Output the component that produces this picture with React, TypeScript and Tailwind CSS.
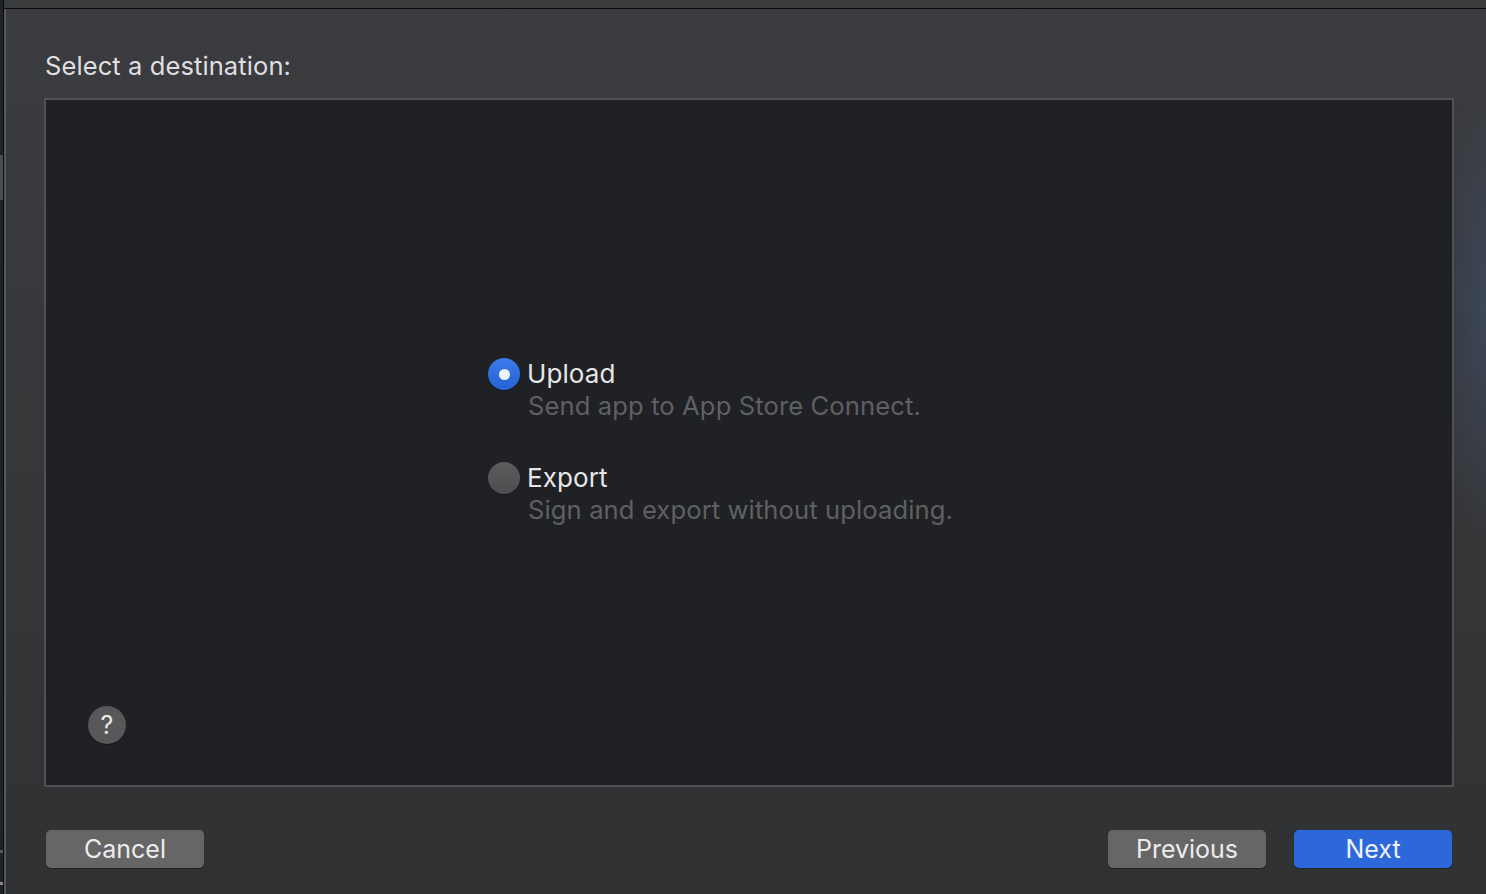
import React from "react";

const font = { fontFamily: "Inter, 'Noto Sans', 'Liberation Sans', sans-serif" };

function Radio({ checked }: { checked: boolean }) {
  return checked ? (
    <div className="w-[32px] h-[32px] rounded-full bg-[linear-gradient(180deg,#3a7bea_0%,#2762d2_100%)] flex items-center justify-center shrink-0 shadow-[0_1px_1px_rgba(0,0,0,0.4)]">
      <div className="w-[11px] h-[11px] rounded-full bg-[#eef2fb]" />
    </div>
  ) : (
    <div className="w-[32px] h-[32px] rounded-full bg-[linear-gradient(180deg,#5c5c5e_0%,#4d4d4f_100%)] shrink-0 shadow-[0_1px_1px_rgba(0,0,0,0.4)]" />
  );
}

function Option({ checked, title, sub }: { checked: boolean; title: string; sub: string }) {
  return (
    <div className="flex flex-col">
      <div className="flex items-center gap-[7px] h-[32px]">
        <Radio checked={checked} />
        <span className="text-[26px] leading-[32px] text-[#e6e6e7] tracking-[0.1px]">{title}</span>
      </div>
      <div className="pl-[40px] text-[25.6px] leading-[32px] text-[#5f6063] tracking-[0.1px]">{sub}</div>
    </div>
  );
}

function Btn({ label, primary }: { label: string; primary?: boolean }) {
  return (
    <button
      className={
        "w-[158px] h-[38px] rounded-[5px] text-[25px] leading-[38px] text-center text-[#ececec] shadow-[0_1px_1px_rgba(0,0,0,0.35)] " +
        (primary ? "bg-[#2c68da] text-[#eef2fb]" : "bg-[#666667]")
      }
    >
      {label}
    </button>
  );
}

export default function App() {
  return (
    <div className="w-[1486px] h-[894px] flex overflow-hidden bg-[#1d2024]" style={font}>
      {/* left edge */}
      <div className="w-[3px] flex flex-col bg-[#1f2226]">
        <div className="h-[155px]" />
        <div className="h-[45px] bg-[#4a4d52]" />
        <div className="flex-1" />
        <div className="h-[3px] bg-[#55585c]" />
        <div className="h-[29px]" />
        <div className="h-[3px] bg-[#8a8a8a]" />
        <div className="h-[9px]" />
      </div>
      <div className="w-px bg-[#0b0b0c]" />
      <div className="flex-1 flex flex-col">
        <div className="h-[8px] bg-[#3a3b3d]" />
        <div className="h-px bg-[#0c0c0d]" />
        <div className="flex-1 flex">
          <div className="w-[2px] bg-[#55575a]" />
          <div className="flex-1 flex flex-col pl-[38px] pr-[32px] pt-[42px] bg-[radial-gradient(ellipse_50px_230px_at_100%_34%,rgba(70,95,140,0.38)_0%,rgba(70,95,140,0)_100%),linear-gradient(180deg,#3b3c3f_0%,#363739_50%,#303133_100%)]">
            <div className="h-[30px] leading-[30px] text-[25.5px] text-[#dfdfe0] pl-[1px] tracking-[0.1px]">
              Select a destination:
            </div>
            <div className="mt-[17px] h-[689px] border-2 border-[#505153] bg-[#202124] flex flex-col">
              <div className="flex-1 flex items-center pt-[78px] pl-[442px]">
                <div className="flex flex-col gap-[40px]">
                  <Option checked title="Upload" sub="Send app to App Store Connect." />
                  <Option checked={false} title="Export" sub="Sign and export without uploading." />
                </div>
              </div>
              <div className="h-[79px] pl-[42px]">
                <div className="w-[38px] h-[38px] rounded-full bg-[#58585a] flex items-center justify-center text-[25px] text-[#e8e8e8] leading-none shadow-[0_1px_1px_rgba(0,0,0,0.4)]">
                  ?
                </div>
              </div>
            </div>
            <div className="mt-[43px] px-[2px] flex items-center">
              <Btn label="Cancel" />
              <div className="flex-1" />
              <Btn label="Previous" />
              <div className="w-[28px]" />
              <Btn label="Next" primary />
            </div>
          </div>
        </div>
      </div>
    </div>
  );
}
